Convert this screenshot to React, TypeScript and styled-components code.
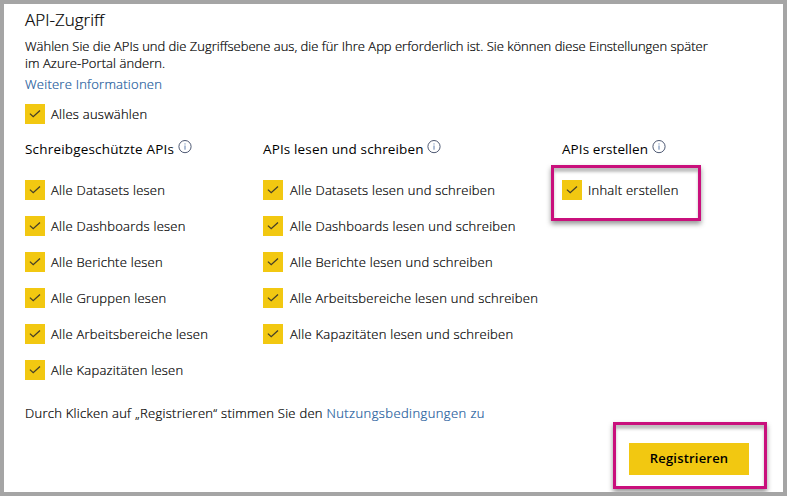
import React from 'react';
import styled, { createGlobalStyle } from 'styled-components';

const GlobalStyle = createGlobalStyle`
  *, *::before, *::after { box-sizing: border-box; }
  body { margin: 0; background: #fff; }
`;

const Page = styled.main`
  width: 787px;
  height: 496px;
  border: 4px solid #a5a5a5;
  padding: 4px 12px 0 21px;
  display: flex;
  flex-direction: column;
  align-items: flex-start;
  overflow: hidden;
  background: #fff;
  color: #000;
  font-family: 'Open Sans', 'Noto Sans', sans-serif;
  font-size: 13px;
  font-weight: 300;
  line-height: 18px;
  white-space: nowrap;
  -webkit-text-stroke: 0.2px currentColor;
`;

const Title = styled.h1`
  margin: 0;
  font-size: 17px;
  font-weight: 300;
  line-height: 24px;
`;

const Intro = styled.p`
  margin: 6px 0 3px;
  line-height: 17px;
`;

const SecondLine = styled.span`
  letter-spacing: 0.06px;
`;

const Link = styled.a<{ $spacing: number }>`
  color: #1b5a9b;
  text-decoration: none;
  letter-spacing: ${({ $spacing }) => $spacing}px;
`;

const SelectAll = styled.div`
  margin: 11px 0 16px;
`;

const Columns = styled.div`
  display: grid;
  grid-template-columns: 238px 299px 150px;
  height: 240px;
`;

const Column = styled.section`
  display: flex;
  flex-direction: column;
  align-items: flex-start;
`;

const ColumnHeader = styled.header<{ $gap: number }>`
  display: flex;
  align-items: flex-start;
  gap: ${({ $gap }) => $gap}px;
  height: 18px;
  margin-bottom: 22px;
`;

const ColumnTitle = styled.h2<{ $spacing: number }>`
  margin: 0;
  font-size: 13.5px;
  font-weight: 400;
  line-height: 18px;
  letter-spacing: ${({ $spacing }) => $spacing}px;
  -webkit-text-stroke: 0;
`;

const InfoSvg = styled.svg`
  display: block;
  width: 14px;
  height: 14px;
`;

const Options = styled.div`
  display: flex;
  flex-direction: column;
  gap: 16px;
`;

const Option = styled.label<{ $gap: number }>`
  display: flex;
  align-items: center;
  gap: ${({ $gap }) => $gap}px;
  height: 20px;
  line-height: 20px;
  letter-spacing: 0.25px;
`;

const CheckBox = styled.span`
  width: 20px;
  height: 20px;
  background: #f2c811;
`;

const CheckSvg = styled.svg`
  display: block;
  width: 20px;
  height: 20px;
`;

const Highlight = styled.div`
  border: 3px solid #c9107c;
  box-shadow: 0 3px 5px rgba(0, 0, 0, 0.42), inset 0 4px 3px rgba(0, 0, 0, 0.25);
`;

const OptionHighlight = styled(Highlight)`
  width: 150px;
  height: 56px;
  margin: -15px 0 0 -11px;
  padding: 12px 0 0 8px;
`;

const Terms = styled.p`
  margin: 24px 0 0;
  letter-spacing: 0.27px;
`;

const ButtonHighlight = styled(Highlight)`
  align-self: flex-end;
  width: 154px;
  height: 67px;
  margin-right: 4px;
  padding: 18px 0 0 13px;
`;

const RegisterButton = styled.button`
  display: block;
  width: 120px;
  height: 32px;
  padding: 0 0 2px;
  border: 0;
  background: #f2c811;
  color: #000;
  font: 600 13px/30px 'Open Sans', 'Noto Sans', sans-serif;
  letter-spacing: 0.2px;
  -webkit-text-stroke: 0;
`;

function InfoIcon() {
  return (
    <InfoSvg viewBox="0 0 14 14" fill="none" aria-hidden="true">
      <circle cx="7" cy="6.6" r="6.1" stroke="#45506b" strokeWidth="0.95" />
      <path d="M7 5.5v4.2" stroke="#5f7fae" strokeWidth="1" />
      <path d="M7 3.4v1.1" stroke="#5f7fae" strokeWidth="1" />
    </InfoSvg>
  );
}

function CheckOption({ label, gap = 6 }: { label: string; gap?: number }) {
  return (
    <Option $gap={gap}>
      <CheckBox>
        <CheckSvg viewBox="0 0 20 20" fill="none" aria-hidden="true">
          <path d="M4.9 9.6 8.2 12.7 15 6.4" stroke="#453f28" strokeWidth="1.3" />
        </CheckSvg>
      </CheckBox>
      <span>{label}</span>
    </Option>
  );
}

const readOptions = ['Datasets', 'Dashboards', 'Berichte', 'Gruppen', 'Arbeitsbereiche', 'Kapazitäten'];
const writeOptions = ['Datasets', 'Dashboards', 'Berichte', 'Arbeitsbereiche', 'Kapazitäten'];

export default function App() {
  return (
    <>
      <GlobalStyle />
      <Page>
        <Title>API-Zugriff</Title>
        <Intro>
          Wählen Sie die APIs und die Zugriffsebene aus, die für Ihre App erforderlich ist. Sie können diese
          Einstellungen später
          <br />
          <SecondLine>im Azure-Portal ändern.</SecondLine>
        </Intro>
        <Link $spacing={0.24}>Weitere Informationen</Link>
        <SelectAll>
          <CheckOption label="Alles auswählen" />
        </SelectAll>
        <Columns>
          <Column>
            <ColumnHeader $gap={4}>
              <ColumnTitle $spacing={0.18}>Schreibgeschützte APIs</ColumnTitle>
              <InfoIcon />
            </ColumnHeader>
            <Options>
              {readOptions.map((name) => (
                <CheckOption key={name} label={`Alle ${name} lesen`} />
              ))}
            </Options>
          </Column>
          <Column>
            <ColumnHeader $gap={3}>
              <ColumnTitle $spacing={0.14}>APIs lesen und schreiben</ColumnTitle>
              <InfoIcon />
            </ColumnHeader>
            <Options>
              {writeOptions.map((name) => (
                <CheckOption key={name} label={`Alle ${name} lesen und schreiben`} gap={7} />
              ))}
            </Options>
          </Column>
          <Column>
            <ColumnHeader $gap={4}>
              <ColumnTitle $spacing={0.08}>APIs erstellen</ColumnTitle>
              <InfoIcon />
            </ColumnHeader>
            <OptionHighlight>
              <CheckOption label="Inhalt erstellen" />
            </OptionHighlight>
          </Column>
        </Columns>
        <Terms>
          Durch Klicken auf „Registrieren“ stimmen Sie den <Link $spacing={0.41}>Nutzungsbedingungen zu</Link>
        </Terms>
        <ButtonHighlight>
          <RegisterButton type="button">Registrieren</RegisterButton>
        </ButtonHighlight>
      </Page>
    </>
  );
}
